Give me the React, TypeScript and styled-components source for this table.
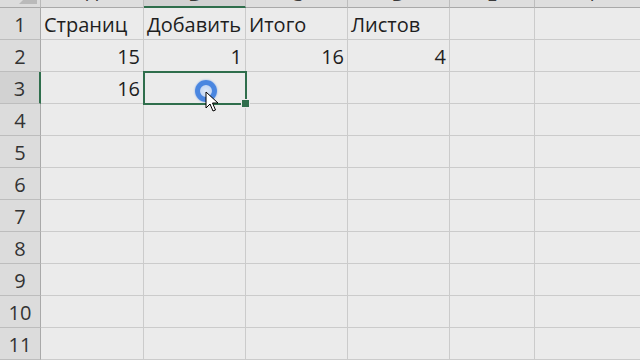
import { Fragment } from "react";
import styled, { createGlobalStyle } from "styled-components";

const GlobalStyle = createGlobalStyle`
  html, body {
    margin: 0;
    padding: 0;
    background: #ebebeb;
  }
  body {
    font-family: "Open Sans", "Liberation Sans", sans-serif;
  }
`;

const COLUMNS = ["A", "B", "C", "D", "E", "F"];
const ROW_COUNT = 11;

const cells: Record<string, { value: string; numeric?: boolean }> = {
  A1: { value: "Страниц" },
  B1: { value: "Добавить" },
  C1: { value: "Итого" },
  D1: { value: "Листов" },
  A2: { value: "15", numeric: true },
  B2: { value: "1", numeric: true },
  C2: { value: "16", numeric: true },
  D2: { value: "4", numeric: true },
  A3: { value: "16", numeric: true },
};

const SELECTED_COL = "B";
const SELECTED_ROW = 3;

const Viewport = styled.div`
  width: 640px;
  height: 360px;
  overflow: hidden;
  background: #ebebeb;
`;

// header row is scrolled mostly out of view, only its bottom edge shows
const Sheet = styled.div`
  display: grid;
  grid-template-columns: 41px 103px 102px 102px 102px 85px 120px;
  grid-template-rows: 24px;
  grid-auto-rows: 32px;
  margin-top: -16px;
`;

const Corner = styled.div`
  background: #dcdcdc;
  border-right: 1px solid #b9b9b9;
  border-bottom: 1px solid #a9a9a9;
  box-sizing: border-box;
  display: flex;
  justify-content: flex-end;
  align-items: flex-end;
  padding: 0 3px 3px 0;

  &::after {
    content: "";
    border-style: solid;
    border-width: 0 0 18px 18px;
    border-color: transparent transparent #bababa transparent;
  }
`;

const ColHeader = styled.div<{ $active: boolean }>`
  box-sizing: border-box;
  display: flex;
  align-items: flex-end;
  justify-content: center;
  background: ${({ $active }) => ($active ? "#d2d2d2" : "#dedede")};
  border-right: 1px solid #bdbdbd;
  border-bottom: ${({ $active }) =>
    $active ? "2px solid #2f6e4c" : "1px solid #a9a9a9"};
  color: #3a3a3a;
  font-size: 19px;
  line-height: 24px;
  padding-bottom: ${({ $active }) => ($active ? "0" : "1px")};
  overflow: hidden;
`;

const RowHeader = styled.div<{ $active: boolean }>`
  box-sizing: border-box;
  display: flex;
  align-items: flex-end;
  justify-content: center;
  background: ${({ $active }) => ($active ? "#d2d2d2" : "#dcdcdc")};
  border-bottom: 1px solid #bdbdbd;
  border-right: ${({ $active }) =>
    $active ? "2px solid #2f6e4c" : "1px solid #a9a9a9"};
  color: #333;
  font-size: 20px;
  line-height: 27px;
  padding-bottom: 1px;
`;

const Cell = styled.div<{ $numeric: boolean; $selected: boolean }>`
  box-sizing: border-box;
  display: flex;
  align-items: flex-end;
  justify-content: ${({ $numeric }) => ($numeric ? "flex-end" : "flex-start")};
  border-right: 1px solid #cbcbcb;
  border-bottom: 1px solid #cbcbcb;
  color: #1e1e1e;
  font-size: 20px;
  line-height: 27px;
  padding: 0 3px 1px 3px;
  white-space: nowrap;
  position: relative;
  outline: ${({ $selected }) => ($selected ? "2px solid #2f6e4c" : "none")};
  outline-offset: -1px;
  z-index: ${({ $selected }) => ($selected ? 1 : 0)};
`;

const FillHandle = styled.div`
  position: absolute;
  right: -5px;
  bottom: -5px;
  width: 7px;
  height: 7px;
  background: #2f6e4c;
  border: 1px solid #ebebeb;
`;

// mouse cursor with busy indicator, sitting over the selected cell
const BusyRing = styled.div`
  position: absolute;
  left: 51px;
  top: 8px;
  width: 22px;
  height: 22px;
  border-radius: 50%;
  box-sizing: border-box;
  border: 5px solid #4a86e0;
  background: radial-gradient(circle, #dfe9f8 0%, #b9cff0 100%);
  box-shadow: 0 0 2px #7aa6ea;
`;

const Pointer = styled.svg`
  position: absolute;
  left: 61px;
  top: 19px;
`;

const App = () => {
  const rows = Array.from({ length: ROW_COUNT }, (_, i) => i + 1);

  return (
    <>
      <GlobalStyle />
      <Viewport>
        <Sheet>
          <Corner />
          {COLUMNS.map((col) => (
            <ColHeader key={col} $active={col === SELECTED_COL}>
              {col}
            </ColHeader>
          ))}
          {rows.map((row) => (
            <Fragment key={row}>
              <RowHeader $active={row === SELECTED_ROW}>{row}</RowHeader>
              {COLUMNS.map((col) => {
                const cell = cells[`${col}${row}`];
                const selected = col === SELECTED_COL && row === SELECTED_ROW;
                return (
                  <Cell
                    key={`${col}${row}`}
                    $numeric={!!cell?.numeric}
                    $selected={selected}
                  >
                    {cell?.value}
                    {selected && (
                      <>
                        <FillHandle />
                        <BusyRing />
                        <Pointer width="14" height="22" viewBox="0 0 14 22">
                          <path
                            d="M1 1 L1 17 L5 13 L8 20 L10.5 19 L7.5 12 L13 12 Z"
                            fill="#fff"
                            stroke="#000"
                            strokeWidth="1"
                            strokeLinejoin="round"
                          />
                        </Pointer>
                      </>
                    )}
                  </Cell>
                );
              })}
            </Fragment>
          ))}
        </Sheet>
      </Viewport>
    </>
  );
};

export default App;
